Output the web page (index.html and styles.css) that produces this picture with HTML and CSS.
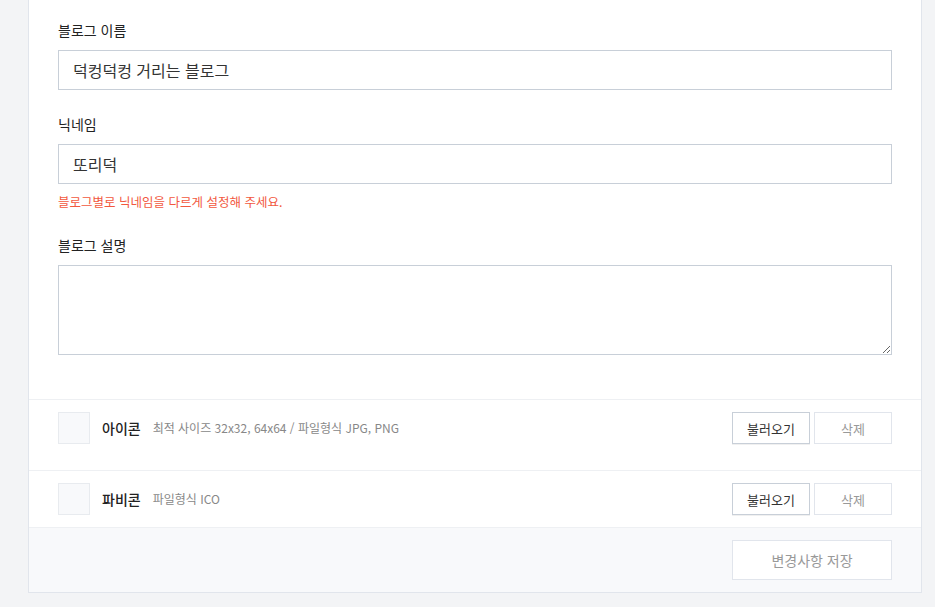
FILE: index.html
```html
<!DOCTYPE html>
<html lang="ko">
<head>
<meta charset="utf-8">
<link rel="stylesheet" href="styles.css">
</head>
<body>
<div class="card">
  <div class="fields">
    <div class="field">
      <label class="label">블로그 이름</label>
      <input class="input" type="text" value="덕컹덕컹 거리는 블로그">
    </div>
    <div class="field">
      <label class="label">닉네임</label>
      <input class="input" type="text" value="또리덕">
      <p class="hint">블로그별로 닉네임을 다르게 설정해 주세요.</p>
    </div>
    <div class="field field-desc">
      <label class="label">블로그 설명</label>
      <textarea class="textarea"></textarea>
    </div>
  </div>
  <div class="row row-first">
    <div class="thumb"></div>
    <span class="row-title">아이콘</span>
    <span class="row-desc">최적 사이즈 32x32, 64x64 / 파일형식 JPG, PNG</span>
    <div class="actions">
      <button class="btn btn-load">불러오기</button>
      <button class="btn btn-del">삭제</button>
    </div>
  </div>
  <div class="row">
    <div class="thumb"></div>
    <span class="row-title">파비콘</span>
    <span class="row-desc">파일형식 ICO</span>
    <div class="actions">
      <button class="btn btn-load">불러오기</button>
      <button class="btn btn-del">삭제</button>
    </div>
  </div>
  <div class="footer">
    <button class="btn-save">변경사항 저장</button>
  </div>
</div>
</body>
</html>
```
FILE: styles.css
```css
* { box-sizing: border-box; }
html, body { margin: 0; padding: 0; }
body {
  background: #f3f4f6;
  font-family: "Noto Sans CJK KR", "Noto Sans", sans-serif;
  color: #222;
  height: 607px;
  overflow: hidden;
}
.card {
  margin: -1px 13px 0 28px;
  background: #fff;
  border: 1px solid #e1e5ec;
}
.fields {
  padding: 21px 29px 44px 29px;
}
.field { margin-bottom: 25px; }
.field-desc { margin-top: 26px; }
.field:last-child { margin-bottom: 0; }
.label {
  display: block;
  font-size: 14px;
  line-height: 19px;
  margin-bottom: 10px;
  color: #222;
}
.input {
  display: block;
  width: 100%;
  height: 40px;
  border: 1px solid #c8cfd8;
  padding: 0 14px;
  font-family: inherit;
  font-size: 16px;
  color: #333;
  outline: none;
}
.hint {
  margin: 9px 0 0;
  font-size: 12.5px;
  line-height: 17px;
  color: #f2583e;
}
.textarea {
  display: block;
  width: 100%;
  height: 90px;
  border: 1px solid #c8cfd8;
  font-family: inherit;
  resize: vertical;
  outline: none;
}
.row {
  display: flex;
  align-items: flex-start;
  border-top: 1px solid #eef0f3;
  padding: 12px 29px 12px 29px;
}
.row-first { padding-bottom: 26px; }
.thumb {
  width: 32px;
  height: 32px;
  background: #f8f9fb;
  border: 1px solid #e8ebef;
  flex: none;
}
.row-title {
  margin-left: 12px;
  font-size: 14px;
  font-weight: 500;
  line-height: 32px;
  color: #222;
}
.row-desc {
  margin-left: 12px;
  font-size: 12px;
  line-height: 32px;
  color: #888;
}
.actions {
  margin-left: auto;
  display: flex;
  gap: 4px;
}
.btn {
  width: 78px;
  height: 32px;
  background: #fff;
  font-family: inherit;
  font-size: 13px;
  padding: 0;
  cursor: pointer;
}
.btn-load {
  border: 1px solid #c8cfd8;
  box-shadow: 0 1px 0 rgba(0,0,0,0.06);
  color: #333;
}
.btn-del {
  border: 1px solid #e1e5ec;
  color: #999;
}
.footer {
  border-top: 1px solid #eef0f3;
  background: #f8f9fb;
  padding: 12px 29px 12px 29px;
  display: flex;
  justify-content: flex-end;
}
.btn-save {
  width: 160px;
  height: 40px;
  background: #fff;
  border: 1px solid #e1e5ec;
  font-family: inherit;
  font-size: 14px;
  color: #999;
  padding: 0;
}
```
